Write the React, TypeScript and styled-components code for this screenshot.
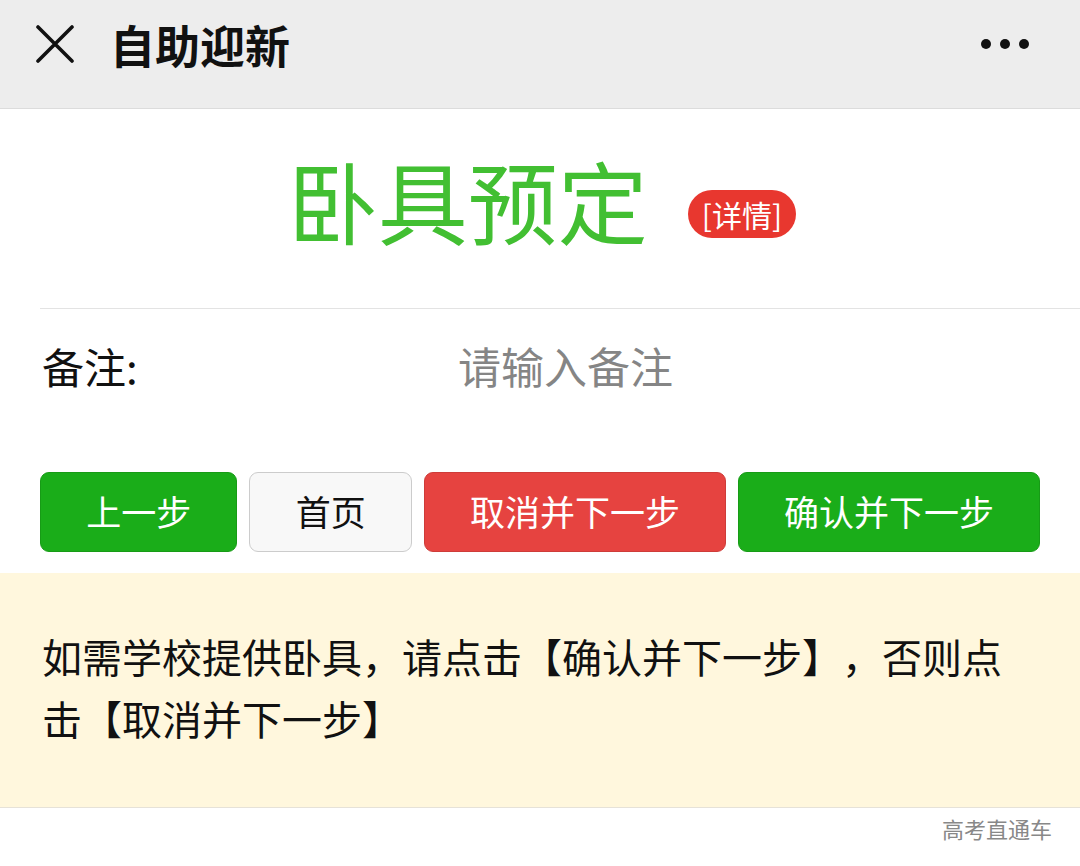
import React from 'react';
import styled, { createGlobalStyle } from 'styled-components';

const GlobalStyle = createGlobalStyle`
  html, body {
    margin: 0;
    padding: 0;
    background: #ffffff;
  }
  body {
    font-family: "Noto Sans CJK SC", "Noto Sans", "Liberation Sans", sans-serif;
    color: #111;
    text-spacing-trim: space-all;
  }
  * {
    box-sizing: border-box;
  }
`;

const Page = styled.div`
  width: 1080px;
  min-height: 866px;
  display: flex;
  flex-direction: column;
`;

const NavBar = styled.div`
  height: 109px;
  background: #ededed;
  border-bottom: 1px solid #dcdcdc;
  display: flex;
  align-items: center;
  padding: 0 50px 0 36px;
  gap: 36px;
`;

const NavTitle = styled.div`
  flex: 1;
  font-size: 45px;
  font-weight: 700;
  color: #111;
  line-height: 1;
  margin-top: -20px;
`;

const NavIcon = styled.svg`
  display: block;
  margin-top: -20px;
`;

const TitleBlock = styled.div`
  height: 199px;
  display: flex;
  align-items: center;
  justify-content: center;
  gap: 40px;
  padding-left: 4px;
`;

const BigTitle = styled.div`
  font-size: 90px;
  color: #42bf32;
  line-height: 1;
  margin-top: -20px;
`;

const Badge = styled.span`
  background: #e8372f;
  color: #fff;
  font-size: 30px;
  line-height: 48px;
  height: 48px;
  padding: 0 14px;
  border-radius: 24px;
  margin-top: 10px;
`;

const Divider = styled.div`
  height: 1px;
  background: #e3e3e3;
  margin-left: 40px;
`;

const FieldRow = styled.div`
  height: 118px;
  display: flex;
  align-items: center;
  padding-left: 42px;
`;

const FieldLabel = styled.label`
  width: 416px;
  font-size: 42px;
  color: #111;
  margin-top: -6px;
`;

const FieldInput = styled.input`
  flex: 1;
  border: none;
  outline: none;
  background: transparent;
  font-family: inherit;
  font-size: 43px;
  padding: 0;
  color: #111;
  margin-top: -6px;

  &::placeholder {
    color: #858585;
  }
`;

const ButtonRow = styled.div`
  display: flex;
  gap: 12px;
  padding: 45px 40px 21px;
`;

const Button = styled.button<{ $kind: 'primary' | 'default' | 'warn'; $w: number }>`
  width: ${p => p.$w}px;
  height: 80px;
  border-radius: 9px;
  font-family: inherit;
  font-size: 35px;
  cursor: pointer;
  padding: 0 0 4px;
  border: 1px solid
    ${p => (p.$kind === 'primary' ? '#179b16' : p.$kind === 'warn' ? '#ce3c39' : '#cccccc')};
  background: ${p => (p.$kind === 'primary' ? '#1aad19' : p.$kind === 'warn' ? '#e64340' : '#f8f8f8')};
  color: ${p => (p.$kind === 'default' ? '#111' : '#fff')};
`;

const Notice = styled.div`
  background: #fff7dd;
  border-bottom: 1px solid #e6e2d8;
  padding: 52px 40px 58px 42px;
  font-size: 40px;
  line-height: 62px;
  color: #111;
`;

const Footer = styled.div`
  display: flex;
  justify-content: flex-end;
  padding: 4px 28px 0 0;
  font-size: 22px;
  color: #888;
`;

const CloseIcon = () => (
  <NavIcon width="38" height="38" viewBox="0 0 38 38">
    <path d="M2 2 L36 36 M36 2 L2 36" stroke="#111" strokeWidth="3.6" strokeLinecap="round" />
  </NavIcon>
);

const MoreIcon = () => (
  <NavIcon width="50" height="12" viewBox="0 0 50 12">
    <circle cx="6" cy="6" r="5" fill="#111" />
    <circle cx="25" cy="6" r="5" fill="#111" />
    <circle cx="44" cy="6" r="5" fill="#111" />
  </NavIcon>
);

export default function App() {
  return (
    <Page>
      <GlobalStyle />
      <NavBar>
        <CloseIcon />
        <NavTitle>自助迎新</NavTitle>
        <MoreIcon />
      </NavBar>

      <TitleBlock>
        <BigTitle>卧具预定</BigTitle>
        <Badge>[详情]</Badge>
      </TitleBlock>
      <Divider />

      <FieldRow>
        <FieldLabel>备注:</FieldLabel>
        <FieldInput placeholder="请输入备注" />
      </FieldRow>

      <ButtonRow>
        <Button $kind="primary" $w={198}>上一步</Button>
        <Button $kind="default" $w={163}>首页</Button>
        <Button $kind="warn" $w={303}>取消并下一步</Button>
        <Button $kind="primary" $w={303}>确认并下一步</Button>
      </ButtonRow>

      <Notice>如需学校提供卧具，请点击【确认并下一步】，否则点击【取消并下一步】</Notice>

      <Footer>高考直通车</Footer>
    </Page>
  );
}
